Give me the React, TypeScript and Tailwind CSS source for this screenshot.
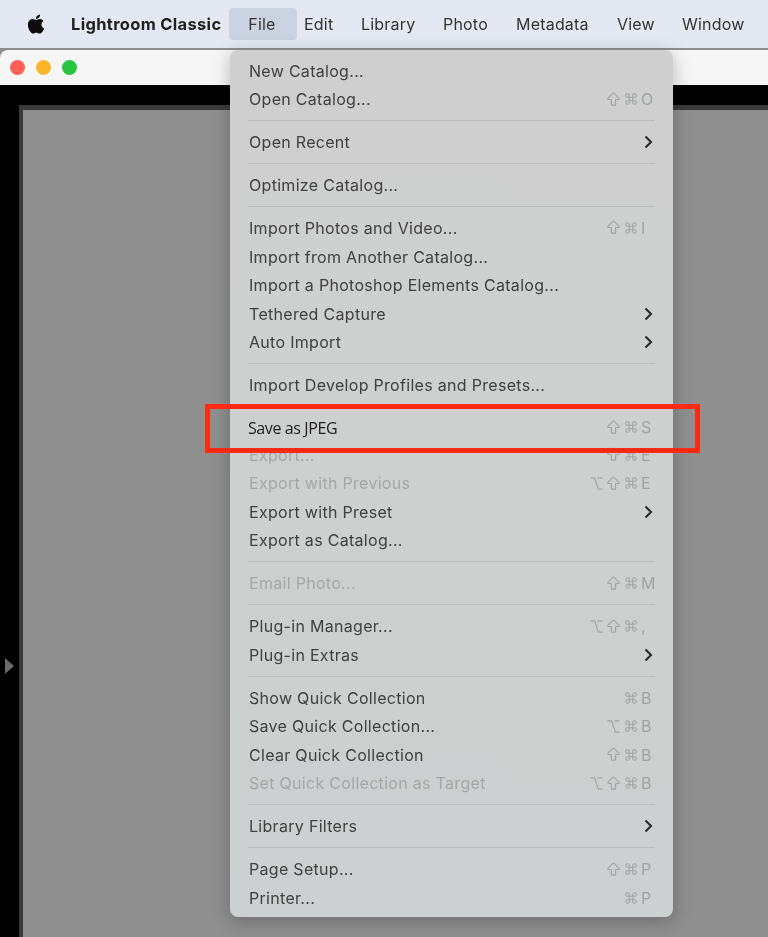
import { FaApple } from 'react-icons/fa';
import { ArrowBigUp, Command, Option } from 'lucide-react';

type Item =
  | { type: 'sep' }
  | {
      type?: 'item';
      label: string;
      keys?: string[];
      off?: boolean;
      sub?: boolean;
      pasted?: boolean;
    };

const menu: Item[] = [
  { label: 'New Catalog...' },
  { label: 'Open Catalog...', keys: ['shift', 'cmd', 'O'] },
  { type: 'sep' },
  { label: 'Open Recent', sub: true },
  { type: 'sep' },
  { label: 'Optimize Catalog...' },
  { type: 'sep' },
  { label: 'Import Photos and Video...', keys: ['shift', 'cmd', 'I'] },
  { label: 'Import from Another Catalog...' },
  { label: 'Import a Photoshop Elements Catalog...' },
  { label: 'Tethered Capture', sub: true },
  { label: 'Auto Import', sub: true },
  { type: 'sep' },
  { label: 'Import Develop Profiles and Presets...' },
  { type: 'sep' },
  { label: 'Save as JPEG', keys: ['shift', 'cmd', 'S'], pasted: true },
  { label: 'Export...', keys: ['shift', 'cmd', 'E'], off: true },
  { label: 'Export with Previous', keys: ['opt', 'shift', 'cmd', 'E'], off: true },
  { label: 'Export with Preset', sub: true },
  { label: 'Export as Catalog...' },
  { type: 'sep' },
  { label: 'Email Photo...', keys: ['shift', 'cmd', 'M'], off: true },
  { type: 'sep' },
  { label: 'Plug-in Manager...', keys: ['opt', 'shift', 'cmd', ','] },
  { label: 'Plug-in Extras', sub: true },
  { type: 'sep' },
  { label: 'Show Quick Collection', keys: ['cmd', 'B'] },
  { label: 'Save Quick Collection...', keys: ['opt', 'cmd', 'B'] },
  { label: 'Clear Quick Collection', keys: ['shift', 'cmd', 'B'] },
  { label: 'Set Quick Collection as Target', keys: ['opt', 'shift', 'cmd', 'B'], off: true },
  { type: 'sep' },
  { label: 'Library Filters', sub: true },
  { type: 'sep' },
  { label: 'Page Setup...', keys: ['shift', 'cmd', 'P'] },
  { label: 'Printer...', keys: ['cmd', 'P'] },
];

const topMenus = [
  { label: 'Edit', cls: 'w-[29px] ml-[7px]' },
  { label: 'Library', cls: 'w-[54px] ml-[28px]' },
  { label: 'Photo', cls: 'w-[45px] ml-[28px]' },
  { label: 'Metadata', cls: 'w-[73px] ml-[28px]' },
  { label: 'View', cls: 'w-[37px] ml-[28px]' },
  { label: 'Window', cls: 'w-[63px] ml-[28px]' },
];

const KeyCap = ({ name }: { name: string }) => {
  if (name === 'shift') return <ArrowBigUp size={17} strokeWidth={1.6} />;
  if (name === 'cmd') return <Command size={14} strokeWidth={1.8} />;
  if (name === 'opt') return <Option size={15} strokeWidth={1.9} />;
  return <span>{name}</span>;
};

const Shortcut = ({ keys }: { keys: string[] }) => (
  <div className="flex items-center text-[#a1a3a3]">
    {keys.map((k, i) =>
      i === keys.length - 1 ? (
        <span key={i} className="w-[14px] pl-[1px] text-[16px] leading-[20px]">
          {k}
        </span>
      ) : (
        <span key={i} className="w-[17.5px] flex justify-center">
          <KeyCap name={k} />
        </span>
      ),
    )}
  </div>
);

const Chevron = () => (
  <svg width="9" height="14" viewBox="0 0 9 14" fill="none" className="mr-[1px]">
    <path d="M1.5 1.5 7 7l-5.5 5.5" stroke="#2b2b2b" strokeWidth="2.1" />
  </svg>
);

export default function App() {
  return (
    <div className="relative w-[768px] h-[937px] overflow-hidden bg-[#8f8f8f] font-['Inter',sans-serif] blur-[0.3px]">
      {/* Menu bar */}
      <div className="flex items-center h-[49px] bg-[#e4e8f3] border-b border-[#8c8d90] text-[16px] tracking-[0.2px] text-[#333333]">
        <FaApple className="ml-[26px] w-[20px] h-[22px] text-[#0c0c0c] mb-[1px]" />
        <span className="ml-[25px] w-[150px] font-bold text-[#1f1f1f] text-[16.5px] tracking-[0.32px] whitespace-nowrap">
          Lightroom Classic
        </span>
        <div className="ml-[8px] w-[68px] h-[32px] rounded-[4px] bg-[#ccd3e0] flex items-center justify-center pr-[2px]">
          File
        </div>
        {topMenus.map((m) => (
          <span key={m.label} className={`${m.cls} whitespace-nowrap`}>
            {m.label}
          </span>
        ))}
      </div>

      {/* Window */}
      <div className="mt-[1px] h-[887px] flex flex-col rounded-tl-[8px] overflow-hidden">
        <div className="flex items-center gap-[11px] pl-[10px] h-[35px] shrink-0 bg-[#f6f6f6]">
          <span className="w-[15px] h-[15px] rounded-full bg-[#ff5f57]" />
          <span className="w-[15px] h-[15px] rounded-full bg-[#fdb62c]" />
          <span className="w-[15px] h-[15px] rounded-full bg-[#27c43f]" />
        </div>
        <div className="flex-1 flex flex-col bg-black pt-[20px]">
          <div className="flex-1 flex">
            <div className="w-[19px] flex items-center">
              <svg width="10" height="16" viewBox="0 0 10 16" className="ml-[5px] mt-[290px]">
                <path d="M0 0l9 8-9 8z" fill="#6a6a6a" />
              </svg>
            </div>
            <div className="flex-1 bg-[#8f8f8f] border-t-[5px] border-l-[4px] border-[#3a3a3a]" />
          </div>
        </div>
      </div>

      {/* File menu */}
      <div className="absolute left-[230px] top-[50px] w-[443px] h-[867px] pt-[6.4px] rounded-[8px] bg-gradient-to-b from-[#cfcfcf] to-[#cdd0d0] shadow-[0_4px_18px_rgba(0,0,0,0.25)] text-[16px] leading-[20px] tracking-[0.3px] text-[#404040]">
        {menu.map((item, i) => {
          if (item.type === 'sep') {
            return (
              <div key={i} className="h-[14.3px] flex items-center px-[18px]">
                <div className="w-full h-[1px] bg-[#b9bbbb]" />
              </div>
            );
          }
          return (
            <div
              key={i}
              className={`flex items-center justify-between pl-[19px] pr-[19px] ${
                item.pasted ? 'h-[26.5px]' : 'h-[28.6px]'
              } ${item.off ? 'text-[#a5a7a7]' : ''}`}
            >
              <span
                className={
                  item.pasted
                    ? "font-['Open_Sans',sans-serif] text-[16px] tracking-[-0.4px] text-[#1c1c1c] -ml-[1px] pt-[2px]"
                    : ''
                }
              >
                {item.label}
              </span>
              {item.keys && <Shortcut keys={item.keys} />}
              {item.sub && <Chevron />}
            </div>
          );
        })}
      </div>

      {/* Red annotation */}
      <div className="absolute left-[205px] top-[404px] w-[495px] h-[49px] border-[5px] border-[#fb2a10]" />
    </div>
  );
}
